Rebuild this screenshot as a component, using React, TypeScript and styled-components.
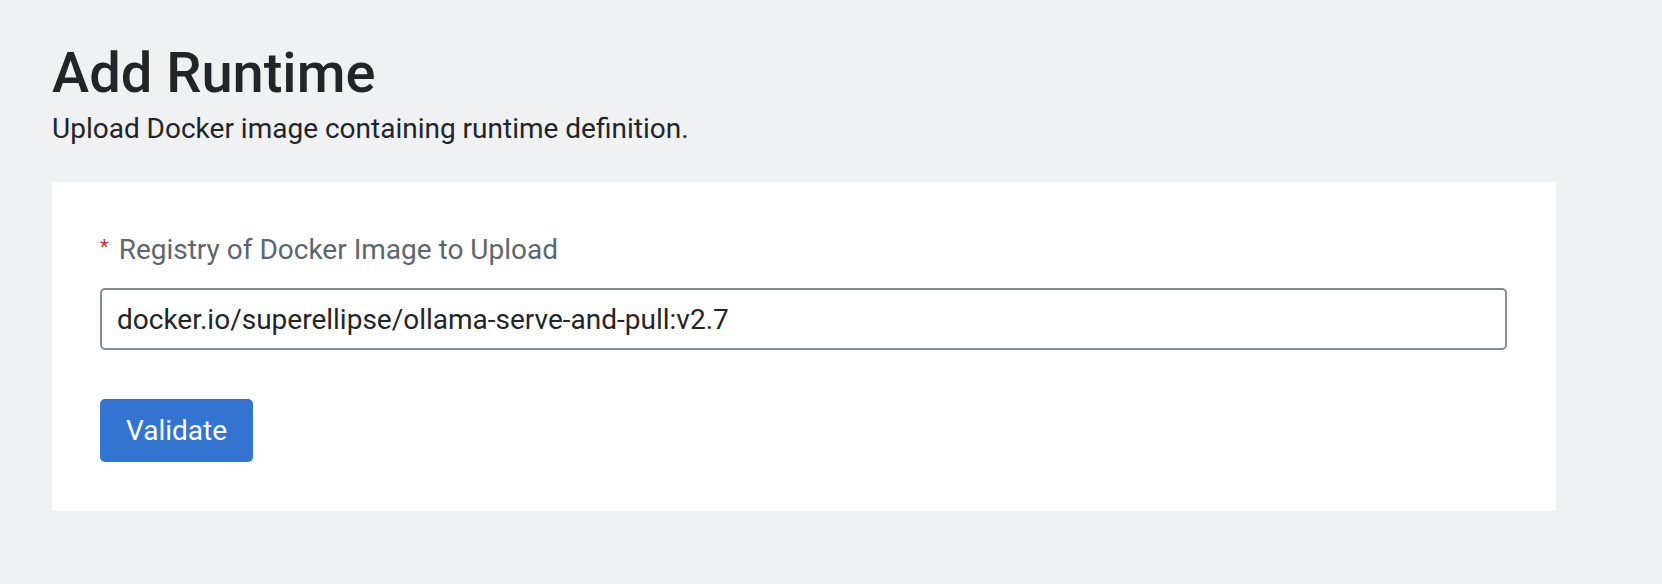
import { FC, useState } from "react";
import styled, { createGlobalStyle } from "styled-components";

const GlobalStyle = createGlobalStyle`
  * {
    box-sizing: border-box;
  }
  body {
    margin: 0;
    background: #f0f1f3;
    font-family: Roboto, "Liberation Sans", sans-serif;
    color: #212529;
  }
`;

const Page = styled.div`
  padding: 40px 52px 40px 52px;
  min-height: 584px;
`;

const Title = styled.h1`
  margin: 0;
  font-size: 56px;
  font-weight: 500;
  line-height: 1.2;
  color: #212529;
`;

const Subtitle = styled.p`
  margin: 1px 0 32px 0;
  font-size: 28px;
  line-height: 1.5;
  color: #212529;
`;

const Card = styled.div`
  width: 1504px;
  background: #ffffff;
  padding: 50px 49px 49px 48px;
  display: flex;
  flex-direction: column;
`;

const Label = styled.label`
  display: block;
  font-size: 28px;
  line-height: 36px;
  color: #5c6670;
  margin-bottom: 20px;
`;

const Required = styled.span`
  font-size: 20px;
  line-height: 0;
  color: #c9302c;
  margin-right: 10px;
  vertical-align: 5px;
`;

const Input = styled.input`
  width: 100%;
  height: 62px;
  padding: 0 15px;
  border: 2px solid #878d94;
  border-radius: 5px;
  font-family: inherit;
  font-size: 28px;
  color: #212529;
  background: #ffffff;
  outline: none;
`;

const Actions = styled.div`
  margin-top: 49px;
  display: flex;
`;

const Button = styled.button<{ $variant?: "primary" | "secondary" }>`
  height: 63px;
  padding: 0 26px;
  border: none;
  border-radius: 5px;
  background: ${(p) => (p.$variant === "secondary" ? "#6c757d" : "#3274cf")};
  color: #ffffff;
  font-family: inherit;
  font-size: 28px;
  cursor: pointer;
`;

const App: FC = () => {
  const [registry, setRegistry] = useState(
    "docker.io/superellipse/ollama-serve-and-pull:v2.7"
  );

  return (
    <>
      <GlobalStyle />
      <Page>
        <Title>Add Runtime</Title>
        <Subtitle>Upload Docker image containing runtime definition.</Subtitle>
        <Card>
          <Label htmlFor="registry">
            <Required>*</Required>
            Registry of Docker Image to Upload
          </Label>
          <Input
            id="registry"
            value={registry}
            onChange={(e) => setRegistry(e.target.value)}
          />
          <Actions>
            <Button $variant="primary">Validate</Button>
          </Actions>
        </Card>
      </Page>
    </>
  );
};

export default App;
